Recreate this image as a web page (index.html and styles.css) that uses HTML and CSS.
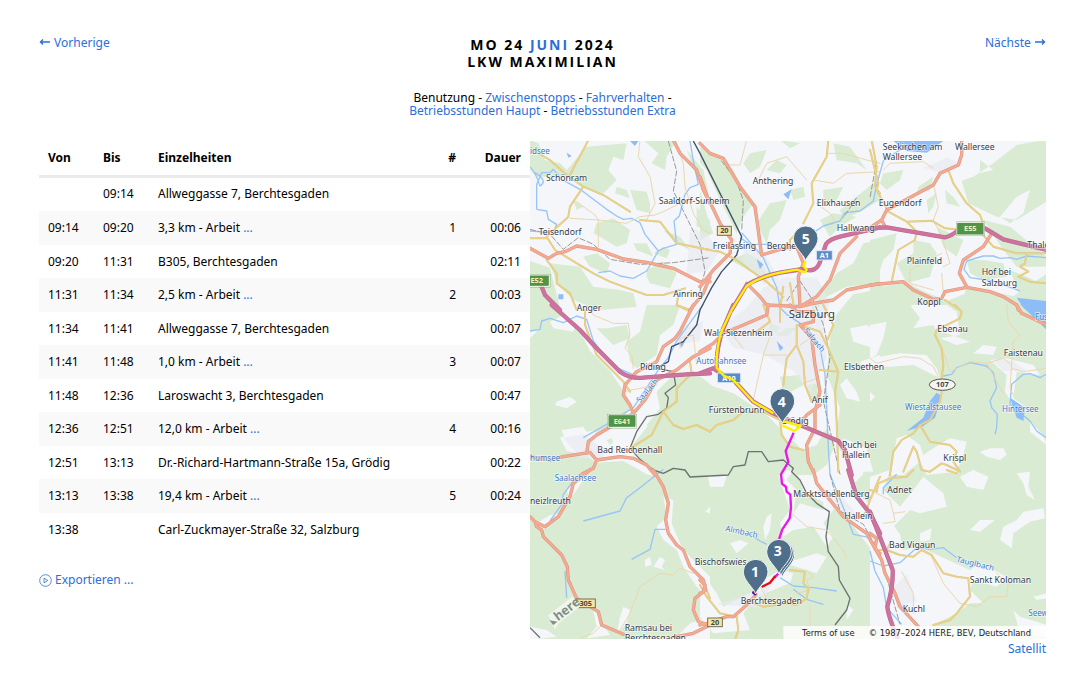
FILE: index.html
```html
<!DOCTYPE html>
<html lang="de">
<head>
<meta charset="utf-8">
<title>LKW Maximilian – Mo 24 Juni 2024</title>
<link rel="stylesheet" href="styles.css">
</head>
<body>
<div class="page">
  <header class="top">
    <a class="prev" href="#prev"><svg class="arrow" viewBox="0 0 12 10" aria-hidden="true"><path d="M11 5H1.5M4 2.500L1.500 5l2.500 2.500"/></svg> Vorherige</a>
    <div class="heading">
      <h1>Mo 24 <a href="#juni">Juni</a> 2024<br>LKW Maximilian</h1>
      <nav>Benutzung - <a href="#stopps">Zwischenstopps</a> - <a href="#fahr">Fahrverhalten</a> -<br><a href="#haupt">Betriebsstunden Haupt</a> - <a href="#extra">Betriebsstunden Extra</a></nav>
    </div>
    <a class="next" href="#next">Nächste <svg class="arrow" viewBox="0 0 12 10" aria-hidden="true"><path d="M1 5h9.500M8 2.500l2.500 2.500-2.500 2.500"/></svg></a>
  </header>
  <main class="content">
    <section class="log">
      <table>
        <thead><tr><th class="time">Von</th><th class="time">Bis</th><th>Einzelheiten</th><th class="num">#</th><th class="dur">Dauer</th></tr></thead>
        <tbody>
          <tr><td></td><td>09:14</td><td>Allweggasse 7, Berchtesgaden</td><td class="num"></td><td class="dur"></td></tr>
          <tr><td>09:14</td><td>09:20</td><td>3,3 km - Arbeit <a href="#t1">...</a></td><td class="num">1</td><td class="dur">00:06</td></tr>
          <tr><td>09:20</td><td>11:31</td><td>B305, Berchtesgaden</td><td class="num"></td><td class="dur">02:11</td></tr>
          <tr><td>11:31</td><td>11:34</td><td>2,5 km - Arbeit <a href="#t2">...</a></td><td class="num">2</td><td class="dur">00:03</td></tr>
          <tr><td>11:34</td><td>11:41</td><td>Allweggasse 7, Berchtesgaden</td><td class="num"></td><td class="dur">00:07</td></tr>
          <tr><td>11:41</td><td>11:48</td><td>1,0 km - Arbeit <a href="#t3">...</a></td><td class="num">3</td><td class="dur">00:07</td></tr>
          <tr><td>11:48</td><td>12:36</td><td>Laroswacht 3, Berchtesgaden</td><td class="num"></td><td class="dur">00:47</td></tr>
          <tr><td>12:36</td><td>12:51</td><td>12,0 km - Arbeit <a href="#t4">...</a></td><td class="num">4</td><td class="dur">00:16</td></tr>
          <tr><td>12:51</td><td>13:13</td><td>Dr.-Richard-Hartmann-Straße 15a, Grödig</td><td class="num"></td><td class="dur">00:22</td></tr>
          <tr><td>13:13</td><td>13:38</td><td>19,4 km - Arbeit <a href="#t5">...</a></td><td class="num">5</td><td class="dur">00:24</td></tr>
          <tr><td>13:38</td><td></td><td>Carl-Zuckmayer-Straße 32, Salzburg</td><td class="num"></td><td class="dur"></td></tr>
        </tbody>
      </table>
      <a class="export" href="#export"><svg viewBox="0 0 13 13" aria-hidden="true"><circle cx="6.500" cy="6.500" r="5.800"/><path d="M5 4.200L8.800 6.500 5 8.800z"/></svg>Exportieren ...</a>
    </section>
    <section class="mapcol">
      <svg class="map" viewBox="0 0 1548 1494" role="img" aria-label="Karte">
        <defs>
          <path id="pin" d="M0 0C-8-22-37-40-37-67A37 37 0 0 1 37-67C37-40 8-22 0 0Z"/>
          <g id="minor">
            <path d="M330 0L325 50 360 110 375 190 350 240M140 185L195 225 205 240 120 235M205 240L205 320M205 240L290 250 330 230M435 0L460 70 465 140 490 220 520 270 540 280M330 230L375 225 400 215 460 185" transform="translate(0 -3)"/>
            <path d="M75 75L120 75 140 0M170 130L200 70 260 50 320 120M340 120L400 130 440 100 540 95M350 190L390 220 410 250M385 40L430 40 500 60 540 70" transform="translate(510 -3)"/>
            <path d="M40 90L60 70 160 65 190 85M190 130L205 200 190 240 215 290 240 370 220 380M215 340L120 390 120 430 190 450M215 400L220 460M240 280L280 280" transform="translate(1020 -3)"/>
            <path d="M170 0L190 30 250 55 295 55 300 90 285 130 305 150 310 190M450 130L450 100 490 90 500 180M280 260L330 250 380 240" transform="translate(0 492)"/>
            <path d="M160 285L190 150 215 80M190 150L260 150M130 130L90 80M300 120L345 90M310 235L350 220M250 240L230 290" transform="translate(510 492)"/>
            <path d="M0 160L20 175 60 165 100 155 150 160 190 185 205 215M220 140L240 200 260 190 300 170 350 175 400 160 425 180 420 250 430 270M410 0L415 50 450 90 430 110 425 180M350 175L380 230 400 265M425 190L460 200 530 190" transform="translate(1020 492)"/>
            <path d="M265 490L300 430 330 350 390 310 430 315 450 295 490 310M150 505L190 490 210 470" transform="translate(0 987)"/>
            <path d="M275 130L320 170 380 180 430 240 440 265M320 300L340 320 320 330 330 360 290 370M330 410L330 470M180 350L210 400" transform="translate(510 987)"/>
            <path d="M20 70L60 90 70 130 105 125M70 130L75 155 40 160M95 305L130 370 130 430M180 250L220 340 270 400 320 410 360 380 410 380 415 340 380 310" transform="translate(1020 987)"/>
          </g>
          <g id="yellow">
            <path d="M0 25L60 60 110 105 160 140 220 165 300 215M330 240L390 245 440 310 540 330M175 0L165 20 135 75 120 105M160 140L120 200 115 230 50 290 75 330 190 400 240 425 280 440 350 465 400 465 465 445M50 295L0 295M50 360L80 400 80 430 120 460 140 510M445 465L440 495 480 510" transform="translate(0 -3)"/>
            <path d="M385 0L380 50 335 130 340 190 310 250M515 0L530 80 525 140 540 160M270 330L270 300 300 270M0 325L60 335 110 360 150 390 200 425 250 470M250 440L240 510M270 430L280 490" transform="translate(510 -3)"/>
            <path d="M0 30L10 70 25 130 20 150 55 215 110 245 185 242 225 265 330 275 370 320 440 340 530 340M235 90L250 130 290 190 330 225 345 265M110 245L140 275 135 300 85 330 65 425M470 340L465 370 450 380 475 395 445 410 480 425 530 430M225 480L270 510" transform="translate(1020 -3)"/>
            <path d="M165 15L165 60 180 100 200 150 230 180 280 230 300 260M480 170L485 205 440 250 440 290 400 320 365 390 300 430M400 320L430 360 460 372 500 360 540 380M440 0L480 20" transform="translate(0 492)"/>
            <path d="M190 0L210 50 170 80M240 0L240 50M290 60L290 120 260 160 250 240M290 120L310 170 315 240 335 290M300 60L360 80 380 120 415 200 360 195M415 200L405 260 410 350 415 500M0 365L30 380 50 360 100 345 130 320 200 325 240 345 245 390 270 425 310 435M370 0L400 60 380 110" transform="translate(510 492)"/>
            <path d="M255 0L275 20 270 40 200 75 195 90 215 130 220 180 215 220M215 260L210 290 180 345 150 360 130 385 95 405 70 440 60 510M150 360L180 410 240 420 260 440 250 470 270 500 230 480 215 475 180 500 155 495 140 440 130 425 100 500" transform="translate(1020 492)"/>
            <path d="M530 360L540 385M530 470L540 460" transform="translate(0 987)"/>
            <path d="M0 345L20 380 60 430 110 440M110 440L115 480 105 510M150 395L190 410 260 400 290 405 320 385 325 355 310 340 315 305 270 300M540 20L510 90 500 120 490 140" transform="translate(510 987)"/>
            <path d="M0 60L20 65 25 40 60 25 110 20 130 0M50 240L90 255 130 260 155 240 185 255 220 310 260 320 295 325 300 380 260 430 240 450 190 465M60 220L50 240 30 240M230 0L260 10" transform="translate(1020 987)"/>
          </g>
          <g id="orange">
            <path d="M0 325L55 355 80 340 105 335 140 318 200 328 280 357 350 367 430 385 510 425 540 425M430 0L450 40 500 90 520 150 540 190M480 510L520 460 540 410" transform="translate(0 -3)"/>
            <path d="M0 10L30 40 70 55 120 140 165 200 185 345 250 325 290 320 310 370 M0 110L20 165 60 250 95 300 90 340 40 390 0 440M310 370L295 410 300 500M140 430L180 470 200 495 300 500 340 490 400 480 440 450 540 430M300 500L350 470 390 420 420 340 470 290" transform="translate(510 -3)"/>
            <path d="M275 0L275 45 265 75 210 100 190 135 50 210 35 240 5 260M35 240L45 260M365 280L340 320 280 360 268 400 290 440M0 435L100 425 130 450 190 478 215 475 225 455 290 442 360 455 400 470 440 495 445 510" transform="translate(1020 -3)"/>
            <path d="M490 0L450 80 435 100 400 125 380 170 320 200 285 240 280 270 300 300 310 325M540 130L490 155 440 195 380 225 345 285 310 325 200 390 175 410 170 445 M0 455L60 465 100 455 180 442 200 465 270 455 310 460 350 480 375 510M200 465L190 490 150 510" transform="translate(0 492)"/>
            <path d="M0 140L40 115 70 85 130 60 200 30 205 0M300 60L335 100 345 180 360 260 345 320 345 370 320 420 325 470 340 500M360 300L320 330 295 365M270 0L290 20 340 20 340 50 300 60" transform="translate(510 492)"/>
            <path d="M440 0L455 25 530 60" transform="translate(1020 492)"/>
            <path d="M180 0L130 40 120 80 85 140 45 170 15 155 0 140M15 155L20 170 35 180 40 200 95 255 112 290 115 330 140 385 205 425 215 465 280 493M370 0L400 50 415 100 407 150 415 190 440 225 460 240 480 290 520 330 527 360M527 360L495 385 490 420 505 455 535 465M440 500L490 490 540 465" transform="translate(0 987)"/>
            <path d="M0 330L15 345 10 365 0 370M0 465L40 455 80 440 100 440 140 405 167 375M340 0L350 40 390 90 430 140 500 190 525 235 540 250" transform="translate(510 987)"/>
            <path d="M0 190L20 205 15 235 35 270 45 310 75 370 90 410 145 470" transform="translate(1020 987)"/>
          </g>
          <g id="motorway">
            <path d="M25 415L45 465 90 510" transform="translate(0 -3)"/>
            <path d="M95 510L140 435Q180 410 240 398L310 387Q350 402 362 360L378 312Q390 297 420 290L540 262" transform="translate(510 -3)"/>
            <path d="M0 265L50 262 225 292Q245 288 265 270L345 265 400 298 530 330" transform="translate(1020 -3)"/>
            <path d="M65 0L150 75 200 130 270 200Q300 222 340 218L470 208 540 205" transform="translate(0 492)"/>
            <path d="M0 205L40 190 70 210 100 225 160 290 220 325 300 360 415 408 435 435 455 510M100 0L70 70Q48 130 50 190" transform="translate(510 492)"/>
            <path d="M445 0L470 80 510 130 540 190" transform="translate(510 987)"/>
            <path d="M0 125L45 240 68 300Q70 350 52 410 55 440 85 510" transform="translate(1020 987)"/>
          </g>
          <g id="valleys">
            <path d="M80 290L120 275 140 290 110 310 75 300M95 375L160 365 170 380 200 375 190 400 210 440 150 440 110 420ZM30 70L0 100 0 80ZM60 50L100 30 140 40 130 80 70 70ZM360 400L390 390 395 410 370 415Z" transform="translate(0 492)"/>
            <path d="M420 240L440 220 470 260 480 290 440 280ZM430 400L500 430 520 500 440 500ZM450 70L500 60 540 90 520 130 460 110ZM480 170L540 150V190L490 200ZM130 440L190 450 200 480 140 480Z" transform="translate(510 492)"/>
            <path d="M0 60L50 50 40 100 20 150 0 160ZM130 70L190 60 210 100 270 90 260 20 230 0 120 0 150 40ZM200 80L230 85 300 110 260 120 210 100ZM0 160L90 145 170 150 200 190 210 220 180 205 130 180 60 185 0 185ZM310 145L340 120 380 125 370 150ZM360 165L410 160 490 180 510 210 440 200 430 280 460 300 450 330 405 260 410 210ZM330 440L360 430 400 430 410 450 390 465 350 455ZM80 400L110 390 150 420 160 450 190 430 240 400 290 410 280 450 260 500 170 510 150 470 100 510 60 510ZM480 350L520 390 530 420 480 380ZM0 260L15 275 0 290Z" transform="translate(1020 492)"/>
            <path d="M20 160L60 135 90 130 40 180ZM110 60L150 20 180 0 120 90ZM345 270L360 260 365 285 345 290ZM390 260L405 270 395 290 405 300 370 290ZM400 80L430 90 425 160 450 220 480 260 540 320V390L500 350 460 290 440 240 400 210 380 170 410 140ZM280 410L300 420 290 460 260 495 270 440ZM185 400L210 450 240 495 170 505 200 470ZM525 125L540 110V130ZM0 470L50 480 80 500 0 510ZM480 460L540 440V510L430 510Z" transform="translate(0 987)"/>
            <path d="M0 300L50 370 70 410 150 370 190 330 240 300 280 310 270 340 170 380 130 430 150 480 40 490 0 440ZM90 220L120 210 145 220 110 250ZM200 140L215 130 210 180 195 210 190 170ZM230 0L280 0 260 30 290 60 280 130 300 100 370 120 370 60 400 120 370 160 400 200 380 230 340 170 280 180 250 200 240 160 270 120ZM440 400L460 420 440 450ZM255 280L350 250 380 260 350 310ZM20 0L80 20 70 50 30 50Z" transform="translate(510 987)"/>
            <path d="M0 20L60 0 40 60 90 110 130 60 160 20 220 70 230 110 150 130 120 120 70 170 60 220 100 240 150 230 190 250 300 300 330 280 410 320 380 350 310 330 300 360 340 400 300 400 260 430 180 470 0 480ZM150 190L185 175 180 210 150 215ZM300 180L330 150 375 150 330 185ZM390 210L400 170 440 150 460 125 520 115 525 145 480 155 430 190 425 235ZM440 10L480 5 475 50 495 90 470 75 460 40ZM270 20L310 0 355 20 340 60 290 50ZM430 420L450 440 500 455 530 465V500L450 490ZM380 470L430 490 420 510 360 500ZM490 380L530 370V385L500 390Z" transform="translate(1020 987)"/>
          </g>
          <g id="woods">
            <path d="M0 0L25 10 45 60 90 70 110 90 170 20 290 10 280 60 250 50 235 90 260 120 220 160 160 140 130 110 20 110 0 90ZM340 0H440L410 50 405 90 365 70 385 40ZM300 150L350 155 360 190 360 220 320 210 310 180ZM260 140L290 150 300 175 255 160ZM200 250L250 235 300 270 290 310 260 320 210 290 190 280ZM350 390L400 365 440 400 420 445 360 430 350 410ZM60 370L150 380 190 440 270 450 310 460 320 500 210 510 130 480 80 430ZM160 350L200 340 240 370 230 400 180 380ZM310 310L350 310 370 350 320 330ZM130 180L160 200 140 210ZM400 320L420 330 410 355 370 340ZM500 200L540 240 540 270 500 260ZM470 30L520 90 540 180 500 110ZM400 270L450 290 480 330 440 310Z" transform="translate(0 -3)"/>
            <path d="M0 20L50 50 100 90 130 150 160 190 130 230 110 280 60 180 20 90 0 70ZM210 190L260 180 240 240 210 270 200 310 170 250ZM150 40L200 30 180 80 150 100 130 70ZM200 90L230 60 260 75 240 100ZM400 10L450 20 500 90 470 70 410 60ZM370 150L430 140 410 180 370 200ZM360 240L400 220 470 230 420 260 390 290ZM410 400L460 370 490 310 540 300V430L440 440 380 470 350 510 330 510ZM90 360L140 340 180 360 210 420 160 400ZM270 150L310 140 315 170 280 180ZM0 150L25 240 40 280 0 300ZM240 0L300 10 270 25ZM420 210L520 130 540 180 490 210 430 240Z" transform="translate(510 -3)"/>
            <path d="M520 0L440 15 370 70 310 110 275 122 295 190 380 230 440 240 530 185V0ZM30 130L40 100 100 90 90 120 50 150ZM145 140L190 110 180 150 140 160ZM225 150L250 170 270 200 230 190ZM170 180L200 160 190 200 175 220ZM0 300L80 280 70 330 30 370 0 340ZM130 300L180 310 200 340 180 410 110 430 80 370 130 340ZM0 340L50 330 20 420 0 430ZM290 360L340 360 400 370 410 410 340 420 300 400ZM340 240L420 260 480 310 530 350V380L440 380 400 330ZM440 170L480 150 460 220 420 250 390 230ZM0 430L170 470 100 510 0 510ZM290 440L380 460 430 510H270ZM200 260L280 300 260 350 220 320ZM420 390L470 410 530 440V500L450 470ZM330 60L370 90 330 100Z" transform="translate(1020 -3)"/>
            <path d="M290 110L330 80 350 0 450 0 430 60 390 90 380 150 320 190 300 170ZM230 70L290 60 300 100 250 120 200 70ZM230 405L245 400 250 412 240 420ZM380 260L430 210 480 260 440 350 370 380 350 360 390 310ZM380 330L540 300V510H380L300 430Z" transform="translate(0 492)"/>
            <path d="M240 215L300 210 310 240 255 270ZM225 90L260 70 290 70 260 95ZM320 240L350 235 355 280 330 290ZM0 230L100 265 200 330 240 370 270 430 280 480 240 510H0ZM290 440L350 420 380 370 405 420 380 480 340 510 290 510ZM210 55L240 65 230 85 205 75Z" transform="translate(510 492)"/>
          </g>
        </defs>
        <rect width="1548" height="1494" class="wood"/>
        <path class="land" d="M0 0H1548V400L1450 465 1340 445 1250 480 1180 450 1120 420 1020 450 970 460 920 520 900 590 890 700 930 800 920 880 930 930 990 950 1000 1000 960 1040 1020 1090 1060 1090 1075 1130 1110 1180 1130 1300 1180 1400 1210 1494H1070L1035 1360 1040 1290 1020 1220 950 1130 890 1090 820 1050 800 990 820 930 790 900 760 900 690 835 600 780 540 730 490 690 450 700 420 730 430 760 400 790 370 850 330 900 300 930 370 970 390 1010 350 1000 280 960 200 965 170 945 110 930 90 890 140 870 190 880 270 840 300 800 280 750 240 690 180 630 145 560 90 500 60 380 0 360Z"/>
        <use href="#valleys" class="land"/>
        <use href="#woods" class="wood"/>
        <path class="town" d="M700 440L760 410 860 410 900 480 880 560 890 650 840 760 790 690 700 640 610 620 570 560 650 500ZM480 260L530 280 570 330 530 390 470 400ZM640 310L700 330 750 420 700 430 640 360ZM1180 80L1250 50 1300 70 1240 100ZM440 570L520 540 510 600 440 610ZM860 1040L930 1060 980 1120 950 1140 900 1090ZM100 890L160 880 230 930 210 960 150 950ZM1090 1340L1130 1300 1160 1380 1100 1400ZM560 1390L690 1350 740 1300 690 1400ZM1380 650L1450 660 1490 690 1420 690Z"/>
        <g class="water">
          <path d="M15 95Q55 120 30 135 15 90 0 78M20 205L20 130 35 95 60 95 70 85 95 115 150 145 190 175 230 205 260 225 280 235 305 232 330 245 345 280 385 330 400 322 440 310 432 240 448 225 465 160 480 140 505 130 490 60 480 0M385 330L350 390 310 412 270 405 240 390 205 395M20 205L50 210 55 235 80 250 70 275 0 270"/>
          <path d="M635 275L700 350 740 440 750 500 770 520 830 560 870 620 885 700 890 800 895 920 900 1000M630 290L660 310 720 310M850 275L880 255 930 240 945 215 990 210 1030 180 1040 130 1060 60 1120 20"/>
          <path d="M0 570L30 565 35 540 60 532 100 545 140 525 170 535 190 600 205 620 240 660 260 680 330 710M520 490L440 600 415 650 390 680 310 800 230 850 160 890M400 985L330 1040 290 1070 270 1110 160 1140M1310 360L1360 345 1390 345 1410 352 1440 350 1460 355 1490 345 1548 350M1310 360L1302 385 1320 410 1390 420 1470 450M1240 705L1265 700 1280 680 1320 665 1370 675 1390 695 1400 740 1380 780 1385 800 1402 820 1400 860 1395 880M1548 700L1530 710 1500 698 1480 700 1445 730 1440 790 1500 840 1520 870 1548 890M1100 1000L1060 1040 1060 1060M1020 1260L1060 1275 1110 1265 1160 1220 1200 1225 1240 1220 1280 1250M1020 1230L1035 1290 1060 1340 1070 1400 1115 1450M900 1000L940 1100 970 1180 1020 1190M660 1180L690 1200 710 1210M750 1310L790 1335 850 1340 920 1350M790 1345L830 1375 880 1390M407 1165L375 1165 360 1225 305 1255M60 1140L95 1090 100 1060 130 1020 190 980M105 1290L110 1370"/>
        </g>
        <path class="lake" d="M300 0H325L315 15ZM1090 0H1240L1190 35 1130 30ZM1460 470L1548 480V560L1480 500ZM1220 755L1235 765 1215 830 1180 855 1130 870 1180 830 1200 780ZM1440 770L1485 800 1480 840 1460 830ZM760 160L785 145 775 175ZM110 35L125 45 115 50ZM85 460H100V475H85ZM680 355L700 370 690 385ZM445 605L465 600 455 620ZM740 600L760 620 750 630ZM1470 490L1548 510V565Z"/>
        <path class="rail" d="M415 0L440 90 430 150 510 310 525 390 510 450M0 265L60 280 100 325 145 290 190 310 240 355 330 370 430 365 540 350M560 40L620 120 640 180 635 270M770 480L810 420 850 480 880 550 900 650 880 780 930 1000M1040 60L1020 170M980 170L940 230M900 1000L930 1110 1000 1150 1050 1240 1110 1450"/>
        <path class="border river" d="M490 0L510 37 570 157 635 287 620 342 575 392 545 440 510 507 500 552 460 602 425 617 415 662 380 682"/>
        <path class="border" d="M380 682L430 692 437 732 405 757 415 770 410 802 385 820 350 827 320 872 300 922 330 955 370 987 400 997 430 982 465 987 480 1008 595 1002 610 977 645 972 655 932 695 932 715 962 760 957 790 982 785 992 810 1017 830 1057 860 1087 898 1112 888 1187 895 1232 925 1277 928 1317 960 1372 950 1407 915 1452M0 1460L30 1490"/>
        <use href="#minor" class="minor"/>
        <use href="#yellow" class="yellow case"/><use href="#yellow" class="yellow"/>
        <use href="#orange" class="orange case"/><use href="#orange" class="orange"/>
        <use href="#motorway" class="motorway case"/><use href="#motorway" class="motorway"/>
        <g class="labels">
          <text x="48" y="119">Schönram</text><text x="26" y="282">Teisendorf</text><text x="386" y="189">Saaldorf-Surheim</text><text x="548" y="323">Freilassing</text><text x="668" y="128">Anthering</text><text x="860" y="194">Elixhausen</text><text x="920" y="270">Hallwang</text><text x="710" y="324">Berghe</text><text x="1046" y="196">Eugendorf</text><text x="1058" y="26">Seekirchen am</text><text x="1058" y="56">Wallersee</text><text x="1275" y="26">Wallersee</text><text x="1130" y="370">Plainfeld</text><text x="1355" y="402">Hof bei</text><text x="1355" y="435">Salzburg</text><text x="1162" y="492">Koppl</text><text x="1492" y="322">Thalg</text><text x="430" y="467">Ainring</text><text x="140" y="510">Anger</text><text x="330" y="686">Piding</text><text x="202" y="936">Bad Reichenhall</text><text x="522" y="585">Wals-Siezenheim</text><text x="536" y="815">Fürstenbrunn</text><text x="845" y="785">Anif</text><text x="752" y="849">Grödig</text><text x="942" y="687">Elsbethen</text><text x="936" y="921">Puch bei</text><text x="936" y="952">Hallein</text><text x="1222" y="572">Ebenau</text><text x="1421" y="645">Faistenau</text><text x="1240" y="960">Krispl</text><text x="790" y="1067">Marktschellenberg</text><text x="943" y="1135">Hallein</text><text x="1072" y="1055">Adnet</text><text x="1077" y="1221">Bad Vigaun</text><text x="1319" y="1326">Sankt Koloman</text><text x="1118" y="1412">Kuchl</text><text x="494" y="1273">Bischofswies</text><text x="632" y="1389">Berchtesgaden</text><text x="284" y="1471">Ramsau bei</text><text x="284" y="1501">Berchtesgaden</text><text x="0" y="1088">neizlreuth</text>
          <text class="city" x="776" y="530">Salzburg</text>
          <g class="lakes"><text x="0" y="40">idsee</text><text x="499" y="668">Autobahnsee</text><text x="0" y="961">humsee</text><text x="74" y="1020">Saalachsee</text><text x="1125" y="806">Wiestalstausee</text><text x="1416" y="812">Hintersee</text><text x="1515" y="536">Fus</text><text x="1495" y="1424">Seew</text><text transform="translate(585 1170) rotate(12)">Almbach</text><text transform="translate(1278 1262) rotate(14)">Tauglbach</text><text transform="translate(330 787) rotate(-50)">Saalach</text><text transform="translate(820 570) rotate(50)">Salzach</text></g>
        </g>
        <g class="shields">
          <g class="euro"><rect x="-8" y="402" width="66" height="34" rx="4"/><rect x="1280" y="244" width="82" height="38" rx="4"/><rect x="234" y="821" width="84" height="38" rx="4"/><text x="20" y="427">E52</text><text x="1321" y="271">E55</text><text x="276" y="848">E641</text></g>
          <g class="auto"><rect x="859" y="329" width="48" height="28"/><rect x="562" y="696" width="70" height="29"/><text x="883" y="351">A1</text><text x="597" y="719">A10</text></g>
          <g class="bund"><rect x="562" y="256" width="42" height="27"/><rect x="138" y="1374" width="58" height="26"/><rect x="533" y="1431" width="44" height="26"/><text x="583" y="277">20</text><text x="167" y="1395">305</text><text x="555" y="1452">20</text></g>
          <ellipse cx="1237" cy="731" rx="39" ry="17"/><text x="1237" y="739">107</text>
        </g>
        <g class="route">
          <path class="gold" d="M827 359L820 375 830 385 825 394 800 386 750 395Q690 407 650 435L605 507 575 570Q558 620 560 680L580 703 610 717 670 782 730 817M757 840L812 855 793 870 757 853"/>
          <path class="pink" d="M791 875L767 930 775 963 753 1000 756 1028 768 1038 770 1052 781 1061 783 1100 779 1132 757 1165 747 1195M745 1298L733 1310"/>
          <path class="red" d="M736 1305L720 1325 695 1338M680 1359L667 1352"/>
          <path class="blue" d="M677 1362L667 1354"/>
        </g>
        <g class="brand" transform="translate(84 1428) rotate(-38)"><path d="M-20-22H72V16H-10L-30 24Z"/><text x="-8" y="10">here</text><path class="tip" d="M-26-8L-10 10H-26Z"/></g>
        <g class="pins">
          <use href="#pin" x="757" y="1307"/><use href="#pin" x="753" y="1303"/><use href="#pin" x="747" y="1299"/><use href="#pin" x="677" y="1359"/><use href="#pin" x="757" y="847"/><use href="#pin" x="827" y="359"/>
          <text x="743" y="1244">3</text><text x="675" y="1307">1</text><text x="755" y="797">4</text><text x="827" y="308">5</text>
        </g>
        <path class="credit" d="M760 1455H1548V1494H760Z"/>
        <g class="legal"><text x="816" y="1485">Terms of use</text><text x="1016" y="1485">© 1987–2024 HERE, BEV, Deutschland</text></g>
      </svg>
      <a class="satellite" href="#satellit">Satellit</a>
    </section>
  </main>
</div>
</body>
</html>
```
FILE: styles.css
```css
* { box-sizing: border-box; }
body { margin: 0; background: #fff; color: #000; font: 12px/18px "Noto Sans", "Open Sans", sans-serif; }
a { color: #2b6edb; text-decoration: none; }
.page { padding: 34px 34px 16px 39px; }
.top { display: grid; grid-template-columns: 1fr auto 1fr; min-height: 107px; }
.next { text-align: right; }
.arrow { width: 12px; height: 10px; fill: none; stroke: currentColor; stroke-width: 1.4; }
.heading { text-align: center; }
h1 { margin: 2px 0 21px; font-family: "Open Sans", sans-serif; font-size: 14px; line-height: 17px; font-weight: 700; letter-spacing: 2px; text-transform: uppercase; }
nav { line-height: 13px; }
.content { display: grid; grid-template-columns: 491fr 516fr; align-items: start; }
table { width: 100%; border-collapse: collapse; table-layout: fixed; }
th, td { padding: 0 9px; text-align: left; white-space: nowrap; }
th { height: 35px; border-bottom: 3px solid #ebebeb; font-weight: 700; }
td { height: 33px; }
tbody tr:first-child td { height: 35px; }
tbody tr:nth-child(even) td { height: 34px; background: #f9f9f9; }
.time { width: 55px; }
th.num { width: 48px; }
th.dur { width: 65px; }
.num, .dur { text-align: right; }
.export { display: inline-flex; align-items: center; gap: 3px; margin-top: 25px; }
.export svg { width: 13px; height: 13px; fill: none; stroke: currentColor; stroke-width: 0.8; }
.mapcol { display: flex; flex-direction: column; gap: 1px; }
.map { display: block; width: 100%; height: auto; font-family: "Open Sans", sans-serif; }
.satellite { align-self: flex-end; }

.wood { fill: #d9ebd2; }
.land { fill: #f4f6fa; }
.town { fill: #e6eaf0; opacity: .6; }
.water { fill: none; stroke: #98c5f7; stroke-width: 4; stroke-linejoin: round; }
.lake { fill: #8dbdf8; }
.rail { fill: none; stroke: #999; stroke-width: 3; stroke-dasharray: 18 5; }
.border { fill: none; stroke: #6b7270; stroke-width: 4; stroke-linejoin: round; }
.river { stroke: #3f5068; }
.minor, .yellow, .orange, .motorway { fill: none; stroke-linejoin: round; stroke-linecap: round; }
.minor { stroke: #ead8ae; stroke-width: 3; }
.yellow { stroke: #ecd383; stroke-width: 4; }
.yellow.case { stroke: #d8c589; stroke-width: 6; }
.orange { stroke: #f5a991; stroke-width: 7; }
.orange.case { stroke: #d89680; stroke-width: 10; }
.motorway { stroke: #cd739d; stroke-width: 10; }
.motorway.case { stroke: #b7688e; stroke-width: 13; }
.labels { fill: #333a4b; font-size: 26px; paint-order: stroke; stroke: #ffffffb0; stroke-width: 4; font-family: "Noto Sans", sans-serif; }
.labels .city { font-size: 34px; }
.labels .lakes { fill: #3c78c8; font-size: 24px; }
.shields { font-size: 22px; font-weight: 700; text-anchor: middle; fill: #444; }
.shields ellipse { fill: #f6f6ef; stroke: #555; stroke-width: 3; }
.euro rect { fill: #519447; stroke: #f5fae8; stroke-width: 3; outline: 1px solid #77916d; }
.euro text { fill: #f4f5b6; }
.auto rect { fill: #5c8bc5; stroke: #dce9f7; stroke-width: 3; }
.auto text { fill: #fff; }
.bund rect { fill: #f5e6a5; stroke: #75704e; stroke-width: 3; }
.route { fill: none; stroke-width: 7; stroke-linejoin: round; }
.gold { stroke: #fff000; }
.pink { stroke: #e619e6; }
.red { stroke: #e60d19; }
.blue { stroke: #2020e0; stroke-width: 5; }
.brand { fill: #f1f6ec; }
.brand text { fill: #7f8f83; font-size: 38px; font-weight: 700; }
.brand .tip { fill: #7f8f83; }
.pins { fill: #4e6e8a; stroke: #f2f5f7; stroke-width: 3; }
.pins text { fill: #fff; stroke: none; font-size: 42px; font-weight: 700; text-anchor: middle; }
.credit { fill: #fffc; }
.legal { fill: #222; font: 25px "DejaVu Sans", sans-serif; }
```
